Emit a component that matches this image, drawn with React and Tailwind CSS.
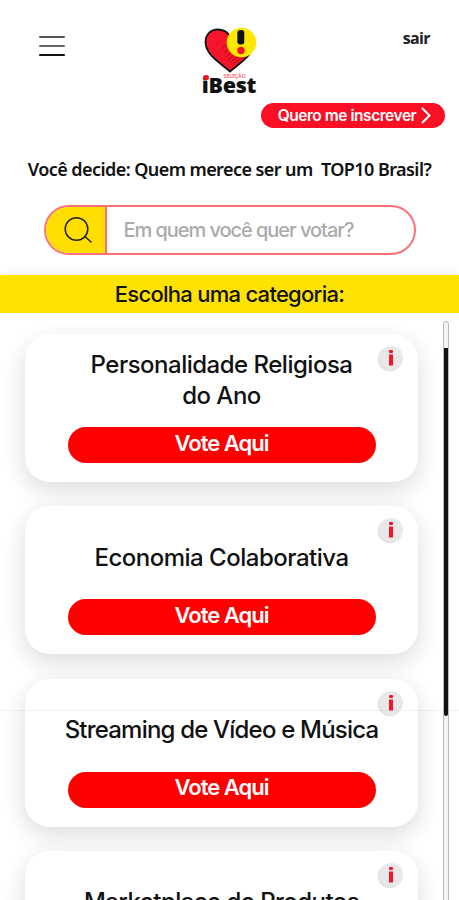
const CATEGORIES = [
  { lines: ['Personalidade Religiosa', 'do Ano'], tracking: 'tracking-[-0.5px]' },
  { lines: ['Economia Colaborativa'], tracking: 'tracking-[-0.5px]' },
  { lines: ['Streaming de Vídeo e Música'], tracking: 'tracking-[-0.8px]' },
  { lines: ['Marketplace de Produtos'], tracking: 'tracking-[-0.550px]' },
];

function Logo() {
  return (
    <div className="flex w-[56px] flex-col items-center">
      <svg className="h-[46px] w-[56px]" viewBox="0 0 56 46" fill="none">
        <path d="M27 43.500C18 35.500 2.500 27 2.500 14C2.500 6.500 8 1.500 14.500 1.500C20 1.500 24.500 4 27 8C29.500 4 34 1.500 38.500 1.500C46 1.500 51 7 51 14C51 27 36 35.500 27 43.500Z" fill="#f5142a" stroke="#111" strokeWidth="1.800" />
        <path d="M19 21l4-4M21 25l5-5M23 29l6-6M25 32l7-6M27 35l9-7M30 36l10-7" stroke="#8c0d18" strokeWidth="0.800" />
        <circle cx="38.500" cy="14.500" r="14.800" fill="#ffe800" />
        <rect x="34.300" y="2" width="7" height="14.500" rx="3" fill="#111" />
        <circle cx="38" cy="22.500" r="3.700" fill="#f5142a" />
      </svg>
      <div className="relative h-[20px] w-full">
        <span className="absolute left-[21px] top-0 text-[5px] leading-[5px] tracking-[0.1px] text-[#f5142a] font-['Open_Sans',sans-serif]">SELEÇÃO</span>
        <span className="absolute left-[-1px] top-[4px] whitespace-nowrap text-[21.500px] leading-[14px] font-extrabold tracking-[-0.3px] text-[#111] font-['Open_Sans',sans-serif]">iBest</span>
        <span className="absolute left-0 top-[1px] h-[5px] w-[6px] rounded-full bg-[#f5142a]" />
      </div>
    </div>
  );
}

function Header() {
  return (
    <header className="flex h-[100px] items-start justify-between pl-[39px] pr-[29px] pt-[28px]">
      <button type="button" aria-label="Menu" className="mt-[8px] flex w-[26px] flex-col gap-[7px]">
        <span className="h-[2px] rounded-full bg-[#555]" />
        <span className="h-[2px] rounded-full bg-[#666]" />
        <span className="h-[2px] rounded-full bg-[#111]" />
      </button>
      <div className="ml-[-6px]">
        <Logo />
      </div>
      <a href="#sair" className="mt-[1px] text-[16px] leading-[18px] font-bold tracking-[-0.6px] text-[#222] font-['Open_Sans',sans-serif]">sair</a>
    </header>
  );
}

function CategoryCard({ lines, tracking }) {
  return (
    <article className="relative flex h-[148px] shrink-0 flex-col items-center rounded-[25px] bg-white shadow-[0_8px_24px_rgba(0,0,0,0.14)]">
      <div className={`flex h-[93px] flex-col items-center justify-center ${lines.length === 1 ? 'pt-[9px]' : 'pb-[2px]'}`}>
        {lines.map((line) => (
          <h2 key={line} className={`whitespace-nowrap text-[24px] leading-[31px] font-medium text-[#111] ${tracking}`}>{line}</h2>
        ))}
      </div>
      <button type="button" className="flex h-[36px] w-[308px] items-center justify-center rounded-full bg-[#ff0000] pb-[4px] text-[22px] font-semibold tracking-[-1px] text-white">
        Vote Aqui
      </button>
      {/* info badge */}
      <span className="absolute right-[15px] top-[12px] flex h-[24px] w-[24px] items-center justify-center rounded-full bg-[#e8e8e8] shadow-[-1px_1px_1px_rgba(0,0,0,0.15)]">
        <svg className="h-[16px] w-[6px]" viewBox="0 0 6 16" fill="#f5142a">
          <rect x="1" y="0" width="4" height="3" rx="1" />
          <rect x="1" y="4.500" width="4" height="11" />
        </svg>
      </span>
    </article>
  );
}

export default function App() {
  return (
    <div className="relative flex h-[900px] w-[459px] flex-col overflow-hidden bg-white font-['Inter',sans-serif]">
      <Header />

      <div className="flex justify-end pr-[14px] pt-[3px]">
        <button type="button" className="flex h-[25px] w-[184px] items-center justify-center gap-[5px] rounded-full bg-[#fb0f24] pl-[3px] text-[15.500px] font-semibold tracking-[-0.450px] text-white">
          <span className="whitespace-nowrap">Quero me inscrever</span>
          <svg className="h-[17px] w-[10px] shrink-0" viewBox="0 0 10 17" fill="none" stroke="white" strokeWidth="2" strokeLinecap="round">
            <path d="M1.500 1.500L8.500 8.500L1.500 15.500" />
          </svg>
        </button>
      </div>

      <p className="mt-[29px] h-[24px] whitespace-pre text-center text-[18px] leading-[24px] font-semibold tracking-[-0.570px] text-[#111] font-['Noto_Sans',sans-serif]">
        Você decide: Quem merece ser um  TOP10 Brasil?
      </p>

      <div className="mx-auto mt-[24px] flex h-[50px] w-[372px] shrink-0 overflow-hidden rounded-full border-2 border-[#fb7378] bg-white">
        <div className="flex w-[61px] items-center justify-center border-r-2 border-[#fb7378] bg-[#ffde00] pl-[5px]">
          <svg className="h-[28px] w-[30px]" viewBox="0 0 30 28" fill="none" stroke="#222" strokeWidth="1.500" strokeLinecap="round">
            <circle cx="13.500" cy="13" r="11.300" />
            <path d="M22 20.500L28 26" />
          </svg>
        </div>
        <div className="flex flex-1 items-center pl-[17px] text-[20px] font-medium tracking-[-1.050px] text-[#aaa]">
          <span className="whitespace-nowrap">Em quem você quer votar?</span>
        </div>
      </div>

      <div className="mt-[20px] flex h-[38px] shrink-0 items-center justify-center bg-[#ffe300] text-[22px] font-medium tracking-[-0.730px] text-[#111] shadow-[0_-6px_14px_rgba(0,0,0,0.03)]">
        Escolha uma categoria:
      </div>

      <main className="flex min-h-0 flex-1 overflow-hidden">
        <div className="flex w-[418px] shrink-0 flex-col gap-[24.300px] pl-[25px] pt-[21px]">
          {CATEGORIES.map((category) => (
            <CategoryCard key={category.lines[0]} {...category} />
          ))}
        </div>
        {/* scrollbar */}
        <div className="ml-[25px] mt-[8px] h-[620px] w-[6px] rounded-full border border-[#bbb] bg-[#f3f3f3]">
          <div className="mt-[26px] h-[368px] w-[4px] rounded-b-full bg-[#111]" />
        </div>
      </main>

      <div className="absolute left-0 top-[710px] h-px w-full bg-black/5" />
    </div>
  );
}
